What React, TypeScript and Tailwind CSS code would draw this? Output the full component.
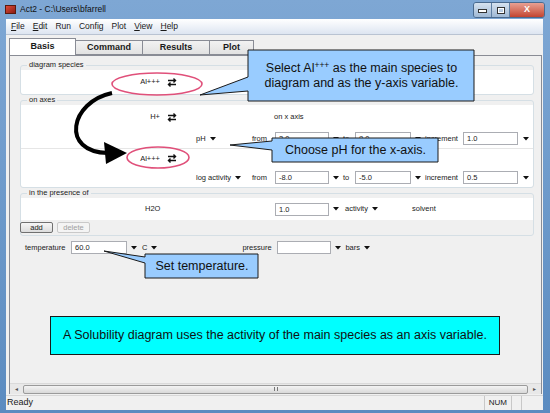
import React from "react";

const ui = { fontFamily: '"Liberation Sans", Arial, sans-serif' };

function Tri() {
  return (
    <svg width="6" height="4" viewBox="0 0 6 4" className="shrink-0">
      <path d="M0 0H6L3 3.5Z" fill="#111" />
    </svg>
  );
}

function Swap() {
  return (
    <svg width="10" height="9" viewBox="0 0 10 9" className="shrink-0">
      <path d="M1 2.5H8.5M6.5 0.6L8.5 2.5L6.5 4.4M9 6.5H1.5M3.5 4.6L1.5 6.5L3.5 8.4" stroke="#111" strokeWidth="1.4" fill="none" />
    </svg>
  );
}

function Field({ w, v }: { w: string; v?: string }) {
  return (
    <div className={`${w} h-[13px] shrink-0 border border-[#abadb3] bg-white pl-[3px] text-[7.5px] leading-[11px] text-[#222]`}>{v}</div>
  );
}

function Species({ name }: { name: string }) {
  return (
    <div className="w-[159px] shrink-0 flex items-center justify-end gap-[7px] pr-[3px]">
      <span>{name}</span>
      <Swap />
    </div>
  );
}

function Range({ label, a, b, c }: { label: string; a: string; b: string; c: string }) {
  return (
    <div className="flex items-center h-[19px] pl-[175px]">
      <div className="w-[56px] flex items-center gap-[4px]"><span>{label}</span><Tri /></div>
      <div className="w-[23px]">from</div>
      <Field w="w-[54px]" v={a} />
      <div className="ml-[4px] w-[10px]"><Tri /></div>
      <div className="w-[12px]">to</div>
      <Field w="w-[56px]" v={b} />
      <div className="ml-[4px] w-[10px]"><Tri /></div>
      <div className="w-[38px]">increment</div>
      <Field w="w-[55px]" v={c} />
      <div className="ml-[5px]"><Tri /></div>
    </div>
  );
}

function Group({ label, children }: { label: string; children: React.ReactNode }) {
  return (
    <fieldset className="ml-[10px] mr-[7px] border border-[#d5dfe5] rounded-[3px] p-0">
      <legend className="ml-[6px] px-[2px] text-[7.5px] leading-[10px] text-[#222]">{label}</legend>
      {children}
    </fieldset>
  );
}

export default function App() {
  return (
    <div className="relative w-[550px] h-[413px] overflow-hidden bg-gradient-to-b from-[#7ea7d4] to-[#5b8bc0] text-[#1a1a1a]" style={ui}>
      {/* title bar */}
      <div className="h-[19px] flex items-center pl-[5px] pr-[5px]">
        <div className="w-[11px] h-[9px] bg-gradient-to-br from-[#e04a3a] to-[#8a1d14] border border-[#5a1a10]" />
        <span className="ml-[4px] text-[8.5px] text-[#111]">Act2 - C:\Users\bfarrell</span>
        <div className="ml-auto flex self-start mt-[2px] border border-[#4a6a8e] rounded-[3px] overflow-hidden">
          <div className="w-[18px] h-[14px] bg-gradient-to-b from-[#d6e2ef] to-[#9fb8d4] border-r border-[#5e7ea3] flex items-end justify-center pb-[4px]">
            <div className="w-[7px] h-[2px] bg-white border border-[#333] box-content" />
          </div>
          <div className="w-[18px] h-[14px] bg-gradient-to-b from-[#d6e2ef] to-[#9fb8d4] border-r border-[#5e7ea3] flex items-center justify-center">
            <div className="w-[6px] h-[5px] border-[1.5px] border-white outline outline-[#333]" />
          </div>
          <div className="w-[34px] h-[14px] bg-gradient-to-b from-[#e8a093] to-[#c2432f] flex items-center justify-center text-white text-[9px] font-bold">X</div>
        </div>
      </div>

      <div className="mx-[6px] mr-[7px] flex flex-col h-[391px] bg-[#f0f0f0]">
        {/* menu */}
        <div className="h-[16px] flex items-center gap-[8px] pl-[5px] text-[8.5px] bg-gradient-to-b from-white to-[#dde5f1] border-b border-[#b9c3d2]">
          <span><u>F</u>ile</span>
          <span><u>E</u>dit</span>
          <span>Run</span>
          <span>Config</span>
          <span>Plot</span>
          <span><u>V</u>iew</span>
          <span><u>H</u>elp</span>
        </div>

        {/* tabs */}
        <div className="h-[20px] flex items-end pl-[3px]">
          <div className="w-[67px] h-[17px] bg-white border border-b-0 border-[#898c95] flex items-center justify-center text-[9px] font-bold">Basis</div>
          {["Command", "Results"].map(t => (
            <div key={t} className="w-[67px] h-[15px] bg-gradient-to-b from-[#f2f2f2] to-[#e2e2e2] border border-l-0 border-[#898c95] flex items-center justify-center text-[9px] font-bold">{t}</div>
          ))}
          <div className="w-[44px] h-[15px] bg-gradient-to-b from-[#f2f2f2] to-[#e2e2e2] border border-l-0 border-[#898c95] flex items-center justify-center text-[9px] font-bold">Plot</div>
        </div>

        {/* panel */}
        <div className="ml-[3px] mr-[1px] h-[339px] border border-b-0 border-[#898c95] bg-[#f0f0f0] flex flex-col text-[7.5px]">
          <div className="flex-1 pt-[4px] flex flex-col">
            <Group label="diagram species">
              <div className="bg-white h-[24px] flex items-center rounded-b-[3px]">
                <Species name="Al+++" />
              </div>
            </Group>

            <Group label="on axes">
              <div className="bg-white rounded-b-[3px]">
                <div className="flex items-center h-[24px]">
                  <Species name="H+" />
                  <span className="ml-[94px]">on x axis</span>
                </div>
                <div className="border-b border-[#e6e6e6]">
                  <Range label="pH" a="3.0" b="8.0" c="1.0" />
                </div>
                <div className="flex items-center h-[19px]">
                  <Species name="Al+++" />
                </div>
                <Range label="log activity" a="-8.0" b="-5.0" c="0.5" />
              </div>
            </Group>

            <Group label="in the presence of">
              <div className="bg-white h-[22px] flex items-center">
                <span className="ml-[124px] w-[130px]">H2O</span>
                <Field w="w-[54px]" v="1.0" />
                <div className="ml-[4px]"><Tri /></div>
                <div className="ml-[6px] w-[67px] flex items-center gap-[4px]"><span>activity</span><Tri /></div>
                <span>solvent</span>
              </div>
              <div className="h-[15px] flex items-start gap-[4px] pt-[2px] -ml-[1px]">
                <div className="w-[33px] h-[11px] border border-[#707070] rounded-[2px] bg-gradient-to-b from-[#f6f6f6] to-[#dcdcdc] flex items-center justify-center">add</div>
                <div className="w-[33px] h-[11px] border border-[#c9c9c9] rounded-[2px] bg-[#f4f4f4] text-[#a0a0a0] flex items-center justify-center">delete</div>
              </div>
            </Group>

            <div className="mt-[5px] flex items-center h-[13px] pl-[15px]">
              <span className="w-[46px]">temperature</span>
              <Field w="w-[56px]" v="60.0" />
              <div className="ml-[4px]"><Tri /></div>
              <div className="ml-[5px] flex items-center gap-[4px]"><span>C</span><Tri /></div>
              <span className="ml-[85px] w-[35px]">pressure</span>
              <Field w="w-[54px]" />
              <div className="ml-[4px]"><Tri /></div>
              <div className="ml-[4px] flex items-center gap-[4px]"><span>bars</span><Tri /></div>
            </div>
          </div>

          {/* horizontal scrollbar */}
          <div className="h-[11px] flex items-center bg-[#e8e8e8] border-t border-[#dadada]">
            <div className="w-[13px] flex justify-center text-[6px] text-[#555]">◂</div>
            <div className="flex-1 h-[9px] rounded-[2px] border border-[#9a9a9a] bg-gradient-to-b from-[#f4f4f4] to-[#d8d8d8] flex items-center justify-center">
              <div className="w-[4px] h-[4px] border-x border-[#777]" />
            </div>
            <div className="w-[13px] flex justify-center text-[6px] text-[#555]">▸</div>
          </div>
        </div>

        {/* status bar */}
        <div className="mt-[1px] h-[15px] flex items-center text-[9px] border-t border-[#d7d7d7]">
          <span className="ml-[1px]">Ready</span>
          <div className="ml-auto h-full flex items-center border-l border-[#c8c8c8] px-[4px] text-[8px]">NUM</div>
          <div className="w-[10px] h-full border-l border-[#c8c8c8]" />
          <div className="w-[22px] h-full border-l border-[#c8c8c8]" />
        </div>
      </div>

      {/* annotations */}
      <svg className="absolute inset-0 pointer-events-none" width="550" height="413" viewBox="0 0 550 413">
        <ellipse cx="157" cy="84" rx="45" ry="11" fill="none" stroke="#e0507a" strokeWidth="1.6" />
        <ellipse cx="158" cy="157.5" rx="31" ry="10.5" fill="none" stroke="#e0507a" strokeWidth="1.6" />
        <path d="M112 93 C70 102 60 152 108 153" fill="none" stroke="#000" strokeWidth="4" />
        <polygon points="104,142 127,153 106,164" fill="#000" />
        <polygon points="248,50 474,50 474,101 248,101 248,91 200,95 248,77" fill="#99ccff" stroke="#1a1a1a" strokeWidth="1" />
        <polygon points="272,138 438,138 438,162 272,162 272,150 230,145 272,141" fill="#99ccff" stroke="#1a1a1a" strokeWidth="1" />
        <polygon points="145,254 258,254 258,278 145,278 145,263 104,251 145,257" fill="#99ccff" stroke="#1a1a1a" strokeWidth="1" />
        <rect x="50.5" y="316.5" width="449" height="38" fill="#00ffff" stroke="#1a1a1a" strokeWidth="1" />
      </svg>
      <div className="absolute left-[249px] top-[51px] w-[225px] h-[50px] flex flex-col items-center justify-center text-[12.5px] leading-[15px] text-[#111]">
        <span>Select Al<sup className="text-[8.5px]">+++</sup> as the main species to</span>
        <span>diagram and as the y-axis variable.</span>
      </div>
      <div className="absolute left-[273px] top-[139px] w-[165px] h-[23px] flex items-center justify-center text-[12.5px] text-[#111]">Choose pH for the x-axis.</div>
      <div className="absolute left-[146px] top-[255px] w-[112px] h-[23px] flex items-center justify-center text-[12.5px] text-[#111]">Set temperature.</div>
      <div className="absolute left-[51px] top-[317px] w-[448px] h-[37px] flex items-center justify-center text-[12.5px] text-[#111]">A Solubility diagram uses the activity of the main species as an axis variable.</div>
    </div>
  );
}
